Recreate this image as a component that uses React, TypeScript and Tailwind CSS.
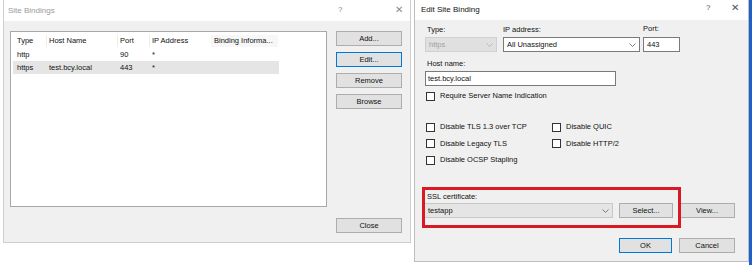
import { ReactNode } from 'react';

const bindings = [
  { type: 'http', host: '', port: '90', ip: '*', selected: false },
  { type: 'https', host: 'test.bcy.local', port: '443', ip: '*', selected: true },
];

function Btn({ children, w, focused = false }: { children: ReactNode; w: string; focused?: boolean }) {
  return (
    <div
      className={`${w} h-[15px] flex items-center justify-center bg-[#e1e1e1] border ${focused ? 'border-[#0078d7]' : 'border-[#adadad]'}`}
    >
      {children}
    </div>
  );
}

function Check({ label }: { label: string }) {
  return (
    <div className="flex items-center h-[10px]">
      <div className="w-[9px] h-[9px] border border-[#333] bg-white" />
      <span className="ml-[5px]">{label}</span>
    </div>
  );
}

function Chevron({ color = '#606060' }: { color?: string }) {
  return (
    <svg width="7" height="4" viewBox="0 0 7 4" className="shrink-0">
      <path d="M0.5 0.5 L3.5 3.5 L6.5 0.5" fill="none" stroke={color} strokeWidth="0.8" />
    </svg>
  );
}

export default function App() {
  return (
    <div className="w-[752px] h-[265px] bg-white flex overflow-hidden font-['Liberation_Sans',Arial,sans-serif] text-[7.5px] leading-none text-[#111]">
      {/* Site Bindings */}
      <div className="ml-[3px] w-[408px] h-[243px] border border-t-0 border-[#cfcfcf] bg-[#f0f0f0] flex flex-col">
        <div className="h-[21px] bg-white flex items-center shrink-0 relative">
          <span className="ml-[4px] text-[8px] text-[#9a9a9a]">Site Bindings</span>
          <span className="absolute left-[334px] top-[6px] text-[8px] text-[#8a8a8a]">?</span>
          <span className="absolute left-[391px] top-[5px] text-[10px] text-[#8a8a8a]">✕</span>
        </div>
        <div className="flex flex-1 pl-[6px] pt-[10px] pb-[9px]">
          <div className="w-[317px] h-[176px] self-start bg-white border border-[#a8a8a8] pl-[2px] pt-[3px]">
            <div className="flex h-[12px] items-center">
              <div className="w-[34px] pl-[4px] border-r border-[#ececec] h-full flex items-center">Type</div>
              <div className="w-[71px] pl-[2px] border-r border-[#ececec] h-full flex items-center">Host Name</div>
              <div className="w-[32px] pl-[2px] border-r border-[#ececec] h-full flex items-center">Port</div>
              <div className="w-[61px] pl-[2px] h-full flex items-center">IP Address</div>
              <div className="w-[67px] pl-[3px] h-full flex items-center bg-[#f7f7f7]">Binding Informa...</div>
            </div>
            <div className="mt-[1px]">
              {bindings.map((b) => (
                <div key={b.type} className={`flex h-[13px] items-center w-[266px] ${b.selected ? 'bg-[#e5e5e5]' : ''}`}>
                  <div className="w-[34px] pl-[4px]">{b.type}</div>
                  <div className="w-[71px] pl-[2px]">{b.host}</div>
                  <div className="w-[32px] pl-[2px]">{b.port}</div>
                  <div className="w-[61px] pl-[2px]">{b.ip}</div>
                </div>
              ))}
            </div>
          </div>
          <div className="ml-[9px] flex flex-col gap-[6px]">
            <Btn w="w-[66px]">Add...</Btn>
            <Btn w="w-[66px]" focused>Edit...</Btn>
            <Btn w="w-[66px]">Remove</Btn>
            <Btn w="w-[66px]">Browse</Btn>
            <div className="mt-auto">
              <Btn w="w-[66px]">Close</Btn>
            </div>
          </div>
        </div>
      </div>

      {/* Edit Site Binding */}
      <div className="ml-[3px] w-[335px] h-[262px] border border-t-0 border-[#bdbdbd] bg-[#f0f0f0] flex flex-col relative">
        <div className="h-[20px] bg-white flex items-center shrink-0 relative">
          <span className="ml-[6px] text-[8px]">Edit Site Binding</span>
          <span className="absolute left-[291px] top-[4px] text-[8px] text-[#555]">?</span>
          <span className="absolute left-[316px] top-[3px] text-[10px] text-[#555]">✕</span>
        </div>
        <div className="pl-[10px] pt-[6px]">
          <div className="flex">
            <div className="w-[72px]">
              <div className="h-[11px] pl-[2px]">Type:</div>
              <div className="h-[15px] bg-[#e0e0e0] border border-[#d0d0d0] flex items-center justify-between px-[3px] text-[#a0a0a0]">
                <span>https</span>
                <Chevron color="#b0b0b0" />
              </div>
            </div>
            <div className="w-[137px] ml-[6px]">
              <div className="h-[11px]">IP address:</div>
              <div className="h-[15px] bg-white border border-[#7a7a7a] flex items-center justify-between px-[3px]">
                <span>All Unassigned</span>
                <Chevron />
              </div>
            </div>
            <div className="w-[37px] ml-[3px]">
              <div className="h-[11px] mt-[-1px]">Port:</div>
              <div className="h-[15px] mt-[1px] bg-white border border-[#7a7a7a] flex items-center px-[3px]">443</div>
            </div>
          </div>
          <div className="mt-[8px] h-[11px] pl-[2px]">Host name:</div>
          <div className="w-[191px] h-[15px] bg-white border border-[#7a7a7a] flex items-center px-[2px]">test.bcy.local</div>
          <div className="mt-[5px] pl-[1px]">
            <Check label="Require Server Name Indication" />
          </div>
          <div className="mt-[21px] pl-[1px] flex">
            <div className="w-[126px] flex flex-col gap-[6.5px]">
              <Check label="Disable TLS 1.3 over TCP" />
              <Check label="Disable Legacy TLS" />
              <Check label="Disable OCSP Stapling" />
            </div>
            <div className="flex flex-col gap-[6.5px]">
              <Check label="Disable QUIC" />
              <Check label="Disable HTTP/2" />
            </div>
          </div>
          <div className="mt-[28px] h-[11px] pl-[2px]">SSL certificate:</div>
          <div className="flex ml-[-1px] mt-[-1px]">
            <div className="w-[189px] h-[15px] bg-[#e5e5e5] border border-[#c8c8c8] flex items-center justify-between px-[3px]">
              <span>testapp</span>
              <Chevron />
            </div>
            <div className="ml-[6px]"><Btn w="w-[54px]">Select...</Btn></div>
            <div className="ml-[6px]"><Btn w="w-[56px]">View...</Btn></div>
          </div>
          <div className="flex mt-[20px] ml-[194px]">
            <Btn w="w-[53px]" focused>OK</Btn>
            <div className="ml-[7px]"><Btn w="w-[56px]">Cancel</Btn></div>
          </div>
        </div>
        {/* red highlight annotation */}
        <div className="absolute left-[7px] top-[187px] w-[259px] h-[41px] border-[3px] border-[#d91a24]" />
      </div>
      <div className="ml-auto w-[3px] h-[265px] bg-[#1f5fc9]" />
    </div>
  );
}
